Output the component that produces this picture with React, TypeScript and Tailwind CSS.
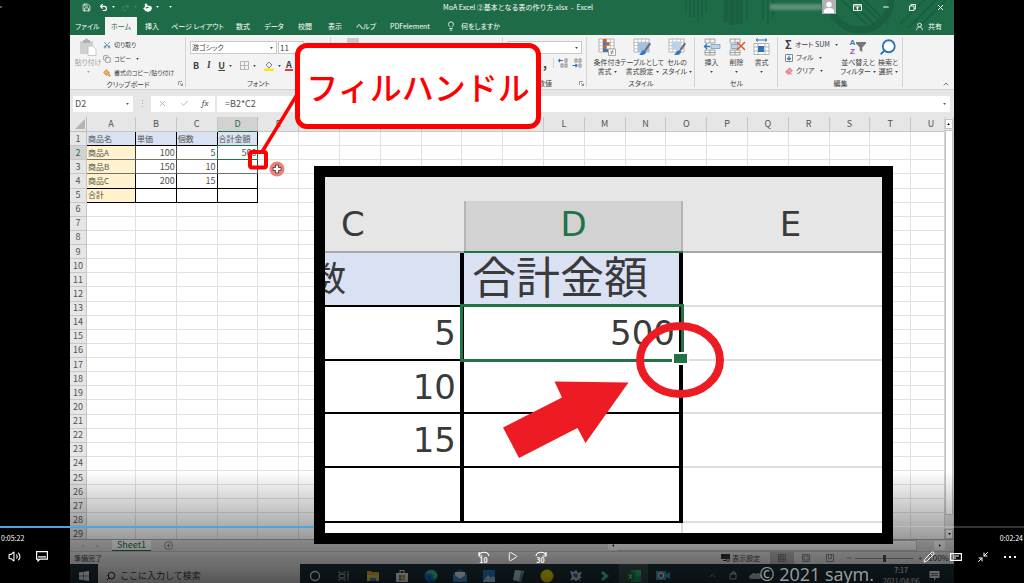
import type { ReactNode } from "react";
import {
  ArrowLeft,
  ChevronUp,
  Clipboard,
  Copy,
  Lightbulb,
  Minus,
  Paintbrush,
  Pencil,
  Play,
  Redo2,
  Save,
  Scissors,
  Search,
  Undo2,
  UserRound,
  Volume2,
  X,
  Check,
  Eraser,
  Minimize2,
  Pointer,
} from "lucide-react";

const TABS = [
  { label: "ファイル", width: "w-[35px]" },
  { label: "ホーム", width: "w-8", active: true },
  { label: "挿入", width: "w-[30px]" },
  { label: "ページ レイアウト", width: "w-[61px]" },
  { label: "数式", width: "w-[30px]" },
  { label: "データ", width: "w-8" },
  { label: "校閲", width: "w-[30px]" },
  { label: "表示", width: "w-[30px]" },
  { label: "ヘルプ", width: "w-8" },
  { label: "PDFelement", width: "w-14" },
];

const COLUMNS = "ABCDEFGHIJKLMNOPQRSTU".split("");

const DATA = [
  ["商品名", "単価", "個数", "合計金額"],
  ["商品A", "100", "5", "500"],
  ["商品B", "150", "10", ""],
  ["商品C", "200", "15", ""],
  ["合計", "", "", ""],
];

function Caret() {
  return (
    <svg viewBox="0 0 4 3" className="h-[2px] w-[3px] shrink-0 fill-current">
      <path d="M0 0h4L2 3z" />
    </svg>
  );
}

function Launcher() {
  return (
    <svg viewBox="0 0 5 5" className="absolute right-[3px] bottom-[3px] size-[5px] fill-none stroke-neutral-500">
      <path d="M.5 4V.5H4M2 2l2.5 2.5M4.5 2.5v2h-2" strokeWidth=".7" />
    </svg>
  );
}

function Group({ label, width, launcher, children }: { label?: string; width: string; launcher?: boolean; children?: ReactNode }) {
  return (
    <section className={`relative flex shrink-0 flex-col ${width}`}>
      <div className="flex flex-1 pt-[3px]">{children}</div>
      {label && <h2 className="h-[11px] text-center leading-[11px]">{label}</h2>}
      {launcher && <Launcher />}
      <span className="absolute top-[2px] right-0 bottom-[2px] w-px bg-[#d4d4d4]" />
    </section>
  );
}

function BigButton({ icon, lines, width, caretBelow }: { icon: ReactNode; lines: string[]; width: string; caretBelow?: boolean }) {
  return (
    <button className={`flex shrink-0 flex-col items-center whitespace-nowrap leading-[9px] ${width}`}>
      <span className="mb-[2px] flex h-[18px] items-center">{icon}</span>
      {lines.map((line, i) => (
        <span key={line} className="flex items-center gap-[2px]">
          {line}
          {!caretBelow && i === lines.length - 1 && <Caret />}
        </span>
      ))}
      {caretBelow && (
        <span className="flex h-[9px] items-center">
          <Caret />
        </span>
      )}
    </button>
  );
}

function SmallButton({ icon, label, caret }: { icon: ReactNode; label: string; caret?: boolean }) {
  return (
    <button className="flex h-[13px] items-center gap-[3px] whitespace-nowrap">
      {icon}
      {label}
      {caret && (
        <span className="pl-[2px]">
          <Caret />
        </span>
      )}
    </button>
  );
}

function GridIcon({ children }: { children?: ReactNode }) {
  return (
    <svg viewBox="0 0 18 18" className="size-[18px]">
      <path d="M1 1h15v13H1z" fill="#fff" stroke="#9a9a9a" strokeWidth=".7" />
      <path d="M1 4.3h15M1 7.6h15M1 10.9h15M4.8 1v13M8.6 1v13M12.4 1v13" stroke="#a8a8a8" strokeWidth=".6" />
      {children}
    </svg>
  );
}

function BrushMark() {
  return (
    <>
      <path d="M16.5 4.5 18 6l-5 7-1.5-1.5z" fill="#6b6b6b" />
      <path d="M11.5 12c-3 0-3 3-5.5 4.5 3 1.3 7 .6 7-3.2z" fill="#3478bd" />
    </>
  );
}

function CellsIcon({ kind }: { kind: "insert" | "delete" | "format" }) {
  return (
    <svg viewBox="0 0 18 18" className="size-[18px]" fill="none">
      {kind !== "format" && <path d="M2 1h10v4H2zM7 1v4M2 12h10v5H2zM7 12v5M2 14.5h10" stroke="#8f8f8f" strokeWidth=".8" />}
      {kind === "insert" && (
        <>
          <path d="M8 6.5h9v4H8z" fill="#bcd3ea" stroke="#7b9cbc" strokeWidth=".8" />
          <path d="M7 8.5H1.5M4 6 1.5 8.5 4 11" stroke="#2e75b6" strokeWidth="1.3" />
        </>
      )}
      {kind === "delete" && (
        <>
          <path d="M3 6.5h7v4H3z" fill="#bcd3ea" stroke="#7b9cbc" strokeWidth=".8" />
          <path d="m9 4 8 8M17 4l-8 8" stroke="#d9572b" strokeWidth="1.5" />
        </>
      )}
      {kind === "format" && (
        <>
          <path d="M1 5.5h15v11H1zM1 9h15M1 13h15M5 5.5v11M12 5.5v11" fill="#fff" stroke="#999" strokeWidth=".7" />
          <path d="M5 8h6v6H5z" fill="#2e75b6" />
          <path d="M3 2h11M5 .5 3 2l2 1.5M12 .5 14 2l-2 1.5" stroke="#2e75b6" />
        </>
      )}
    </svg>
  );
}

function TitleBar() {
  return (
    <header className="relative h-[35px] shrink-0 overflow-hidden bg-[#1e6c47] text-white">
      <svg viewBox="0 0 270 35" className="absolute top-0 right-0 h-[35px] w-[270px]" fill="none" stroke="#1a6040">
        <path d="M2 0v13M6 0v17M10 0v17M14 0v22M18 0v17M22 0v12M58 0v24M63 0v20M79 0v20M84 0v24M89 0v18" strokeWidth="1.6" />
        <path d="M42 0v22M48 0v25M54 0v24" strokeWidth="5" />
        <circle cx="176" cy="-1" r="31" strokeWidth="7" />
        <path d="m160-6 32 32M166-8l32 32M172-8l32 32M154-4l28 28M216 24 246-6M224 28l34-34M232 30l36-36" strokeWidth="2" />
      </svg>
      <div className="relative flex h-[14px] items-center">
        <div className="flex flex-1 items-center gap-[6px] pl-3">
          <button aria-label="上書き保存"><Save className="size-[9px]" /></button>
          <button aria-label="元に戻す" className="flex items-center gap-1 pl-[2px]"><Undo2 className="size-[9px]" strokeWidth={3} /><Caret /></button>
          <button aria-label="やり直し" className="flex items-center gap-1 text-[#4c8c6c]"><Redo2 className="size-[9px]" /><Caret /></button>
          <button aria-label="タッチ/マウス モード" className="flex items-center gap-1"><Pointer className="size-[9px]" fill="currentColor" /><Caret /></button>
          <button aria-label="カスタマイズ" className="pl-1"><Caret /></button>
        </div>
        <h1 className="whitespace-pre text-[7px]">MoA Excel ②基本となる表の作り方.xlsx  -  Excel</h1>
        <div className="flex flex-1 items-center justify-end">
          <span className="h-[6px] w-[52px] bg-[#5d8f78] blur-[1px]" />
          <span className="mr-[17px] flex size-[14px] items-end justify-center bg-[#b3b3b3]">
            <svg viewBox="0 0 14 14" className="size-[14px] fill-white">
              <circle cx="7" cy="4.5" r="2.7" />
              <path d="M2 13V11c0-2 2-3 5-3s5 1 5 3v2z" />
            </svg>
          </span>
          <button aria-label="リボンの表示オプション" className="mr-5">
            <svg viewBox="0 0 9 7" className="h-[7px] w-[9px]" fill="none" stroke="currentColor" strokeWidth=".9">
              <path d="M.5.5h8v6h-8zM.5 2h8M4.5 6V3M3 4.3 4.5 3 6 4.3" />
            </svg>
          </button>
          <button aria-label="最小化" className="mr-[19px]"><Minus className="size-[8px]" strokeWidth={3} /></button>
          <button aria-label="元に戻す(縮小)" className="mr-5">
            <svg viewBox="0 0 7 7" className="size-[7px]" fill="none" stroke="currentColor" strokeWidth=".9">
              <path d="M.5 2H5v4.5H.5zM2 2V.5h4.5V5H5" />
            </svg>
          </button>
          <button aria-label="閉じる" className="mr-[9px]"><X className="size-[9px]" strokeWidth={2.5} /></button>
        </div>
      </div>
      <nav className="relative mt-[3px] flex h-[18px] items-stretch text-[7px] [font-feature-settings:'palt']">
        {TABS.map((tab) => (
          <button key={tab.label} className={`shrink-0 whitespace-nowrap text-center ${tab.width} ${tab.active ? "bg-[#f3f3f3] text-[#1e6c47]" : ""}`}>
            {tab.label}
          </button>
        ))}
        <button className="flex items-center gap-[5px] whitespace-nowrap pl-2">
          <Lightbulb className="size-[10px]" />
          何をしますか
        </button>
        <button className="mr-3 ml-auto flex items-center gap-1">
          <UserRound className="size-[9px]" />
          共有
        </button>
      </nav>
    </header>
  );
}

function Ribbon() {
  return (
    <div className="flex h-[55px] shrink-0 border-b border-[#d0d0d0] bg-[#f3f3f3] text-[7px] text-neutral-700 [font-feature-settings:'palt']">
      <Group label="クリップボード" width="w-[116px]" launcher>
        <div className="pl-[3px] text-neutral-400">
          <BigButton
            width="w-[30px]"
            caretBelow
            lines={["貼り付け"]}
            icon={
              <svg viewBox="0 0 18 18" className="size-[18px]">
                <path d="M1 3h13v13H1z" fill="#cfcfcf" />
                <path d="M4 2h2c0-2 3-2 3 0h2v3H4z" fill="#b0b0b0" />
                <path d="M9 8h5l3 3v6.500H9z" fill="#fff" stroke="#bdbdbd" strokeWidth=".8" />
              </svg>
            }
          />
        </div>
        <div className="flex flex-col gap-px text-[6px]">
          <SmallButton icon={<Scissors className="size-[8px] -rotate-90 text-[#41719c]" />} label="切り取り" />
          <SmallButton icon={<Copy className="size-[8px] text-neutral-500" />} label="コピー" caret />
          <SmallButton icon={<Paintbrush className="size-[8px] rotate-90 text-[#c9782b]" fill="#f0b070" />} label="書式のコピー/貼り付け" />
        </div>
      </Group>
      <Group label="フォント" width="w-[145px]">
        <div className="flex flex-col gap-[5px] pt-[3px] pl-1">
          <div className="flex gap-px">
            <span className="relative flex items-center">
              <select aria-label="フォント名" className="h-[13px] w-[87px] appearance-none border border-[#c8c8c8] bg-white px-px">
                <option>游ゴシック</option>
              </select>
              <span className="pointer-events-none absolute right-1"><Caret /></span>
            </span>
            <select aria-label="フォント サイズ" className="h-[13px] w-[26px] appearance-none border border-[#c8c8c8] bg-white px-px text-[8px]">
              <option>11</option>
            </select>
          </div>
          <div className="flex items-center gap-2 pl-[3px] text-[9px] leading-[13px]">
            <button className="font-bold">B</button>
            <button className="font-serif font-bold italic">I</button>
            <button className="flex items-center gap-1 font-bold"><u>U</u><Caret /></button>
            <button aria-label="罫線" className="flex items-center gap-1">
              <svg viewBox="0 0 9 9" className="size-[9px]" fill="none" stroke="#b5b5b5"><path d="M.5.5h8v8h-8zM4.5 0v9M0 4.500h9" /></svg>
              <Caret />
            </button>
            <button aria-label="塗りつぶしの色" className="flex items-center gap-1">
              <svg viewBox="0 0 10 10" className="size-[10px]"><path d="M0 7.500h10V10H0z" fill="#f5e61d" /><path d="m5 1 3 3-3 3-3-3z" fill="#eee" stroke="#666" strokeWidth=".8" /></svg>
              <Caret />
            </button>
            <button className="-ml-1 h-[10px] border-b-2 border-[#e03c31] px-px leading-[8px] font-bold">A</button>
          </div>
        </div>
      </Group>
      <Group width="w-[172px]">
        <span className="ml-4 h-4 w-3 bg-[#c9c9c9]" />
      </Group>
      <Group label="数値" width="w-[84px]" launcher>
        <div className="flex flex-1 flex-col gap-1 px-[5px] pt-[3px]">
          <span className="relative flex items-center">
            <select aria-label="数値の書式" className="h-[13px] w-full appearance-none border border-[#c8c8c8] bg-white px-px">
              <option></option>
            </select>
            <span className="pointer-events-none absolute right-1"><Caret /></span>
          </span>
          <div className="flex justify-end gap-1">
            <button className="h-[10px] border-r border-[#d4d4d4] pr-[6px] text-[12px] leading-[4px] font-bold">,</button>
            <button aria-label="小数点以下の表示桁数を増やす">
              <svg viewBox="0 0 10 10" className="size-[10px]" fill="none" stroke="#777" strokeWidth=".8"><path d="M5 2.500H.5M2 1 .5 2.500 2 4" stroke="#2e75b6" strokeWidth="1.200" /><rect x="7" y="1" width="2" height="3" /><rect x="3" y="6" width="2" height="3" /><rect x="7" y="6" width="2" height="3" /></svg>
            </button>
            <button aria-label="小数点以下の表示桁数を減らす">
              <svg viewBox="0 0 10 10" className="size-[10px]" fill="none" stroke="#777" strokeWidth=".8"><path d="M.5 7.500H5M3.500 6 5 7.500 3.500 9" stroke="#2e75b6" strokeWidth="1.200" /><rect x="3" y="1" width="2" height="3" /><rect x="7" y="1" width="2" height="3" /><rect x="7" y="6" width="2" height="3" /></svg>
            </button>
          </div>
        </div>
      </Group>
      <Group label="スタイル" width="w-[108px]">
        <div className="flex pl-1">
          <BigButton width="w-8" lines={["条件付き", "書式"]} icon={<GridIcon><path d="M5 1h3.500v3.300H5zM5 7.600h3.500v3.300H5zM8.600 4.300h3v3.300h-3z" fill="#d9572b" /><path d="M5 4.300h3.600v3.300H5zM5 10.900h5V14H5z" fill="#3478bd" /><path d="M10.500 11h7v6.500h-7z" fill="#fff" stroke="#888" strokeWidth=".7" /><path d="M12.500 13.500h3M12.500 15h3M15 12l-2 4.500" stroke="#666" strokeWidth=".6" /></GridIcon>} />
          <BigButton width="w-[38px]" lines={["テーブルとして", "書式設定"]} icon={<GridIcon><path d="M4.800 4.300H16V14H4.800z" fill="#8fb8de" fillOpacity=".8" /><BrushMark /></GridIcon>} />
          <BigButton width="w-8" lines={["セルの", "スタイル"]} icon={<GridIcon><path d="M3.500 3.500h10v8h-10z" fill="#b9d2ea" /><BrushMark /></GridIcon>} />
        </div>
      </Group>
      <Group label="セル" width="w-[83px]">
        <div className="flex pl-1">
          <BigButton width="w-[25px]" caretBelow lines={["挿入"]} icon={<CellsIcon kind="insert" />} />
          <BigButton width="w-[25px]" caretBelow lines={["削除"]} icon={<CellsIcon kind="delete" />} />
          <BigButton width="w-[25px]" caretBelow lines={["書式"]} icon={<CellsIcon kind="format" />} />
        </div>
      </Group>
      <Group label="編集" width="w-[125px]">
        <div className="flex w-14 flex-col pl-[7px]">
          <SmallButton icon={<span className="w-2 text-[11px] leading-[9px] font-bold">Σ</span>} label="オート SUM" caret />
          <SmallButton icon={<svg viewBox="0 0 8 8" className="size-2" fill="none"><path d="M.5.5h7v7h-7z" fill="#fff" stroke="#888" /><path d="M4 1.500V6M2 4l2 2 2-2" stroke="#2e75b6" strokeWidth="1.200" /></svg>} label="フィル" caret />
          <SmallButton icon={<Eraser className="size-2 text-[#d9707a]" fill="#ee9aa2" />} label="クリア" caret />
        </div>
        <div className="flex pl-2">
          <BigButton
            width="w-8"
            lines={["並べ替えと", "フィルター"]}
            icon={
              <span className="flex items-center gap-px">
                <span className="flex flex-col font-['Liberation_Sans',sans-serif] text-[8px] leading-[9px] font-bold">
                  <span className="text-[#3478bd]">A</span>
                  <span className="text-[#9a4fb5]">Z</span>
                </span>
                <svg viewBox="0 0 10 10" className="size-[10px] fill-[#777]"><path d="M0 0h10v1.500L6.300 5.500V10l-2.600-1.500v-3L0 1.500z" /></svg>
              </span>
            }
          />
          <BigButton width="w-7" lines={["検索と", "選択"]} icon={<Search className="size-[18px] -scale-x-100 text-[#2e75b6]" fill="#fff" strokeWidth={2.5} />} />
        </div>
      </Group>
      <button aria-label="リボンを折りたたむ" className="mr-1 mb-px ml-auto self-end"><ChevronUp className="size-[8px]" /></button>
    </div>
  );
}

function FormulaBar() {
  return (
    <div className="flex h-[27px] shrink-0 items-center bg-[#e6e6e6] pr-1 pl-[3px] text-[9px] text-neutral-600">
      <span className="relative flex items-center">
        <input aria-label="名前ボックス" defaultValue="D2" className="h-4 w-[60px] bg-white px-[2px]" />
        <span className="absolute right-1"><Caret /></span>
      </span>
      <span className="flex w-[18px] flex-col items-center gap-[2px]">
        <i className="size-px bg-neutral-400" />
        <i className="size-px bg-neutral-400" />
        <i className="size-px bg-neutral-400" />
      </span>
      <div className="mr-[2px] flex h-4 w-16 items-center justify-around bg-white text-neutral-400">
        <button aria-label="キャンセル"><X className="size-[9px]" /></button>
        <button aria-label="入力"><Check className="size-[9px]" /></button>
        <button aria-label="関数の挿入" className="font-serif text-neutral-600 italic">fx</button>
      </div>
      <span className="relative flex flex-1 items-center">
        <input aria-label="数式バー" defaultValue="=B2*C2" className="h-4 w-full bg-white px-2" />
        <span className="absolute right-1 text-neutral-600"><Caret /></span>
      </span>
    </div>
  );
}

function cellStyle(row: number, col: number) {
  if (row > 4 || col > 3) return "border-[#e1e1e1]";
  const fill = row === 0 ? "bg-[#dae3f3] text-[8px]" : col === 0 ? "bg-[#fff2cc] text-[8px]" : "text-right";
  const edge = row === 0 || row === 4 || row === 3 ? "border-black" : "border-b-neutral-500 border-r-neutral-700";
  return `${fill} ${edge}`;
}

function Sheet() {
  return (
    <div className="flex min-h-0 flex-1 bg-[#e6e6e6]">
      <div className="min-w-0 flex-1 overflow-hidden">
        <table className="h-[425px] w-[calc(100%+8px)] table-fixed border-separate border-spacing-0 bg-white text-[9px] leading-[12px] text-neutral-600">
          <colgroup>
            <col className="w-[17px]" />
            <col className="w-[49px]" />
          </colgroup>
          <thead>
            <tr className="h-[15px] bg-[#e6e6e6]">
              <th className="border-r border-b border-[#bdbdbd] p-0">
                <svg viewBox="0 0 10 10" className="ml-[5px] size-[10px] fill-[#b5b5b5]"><path d="M10 0v10H0z" /></svg>
              </th>
              {COLUMNS.map((name) => (
                <th key={name} scope="col" className={`border-r border-b p-0 font-normal ${name === "D" ? "border-r-[#bdbdbd] border-b-[#217346] bg-[#d2d2d2] text-[#217346]" : "border-[#c6c6c6]"}`}>
                  {name}
                </th>
              ))}
            </tr>
          </thead>
          <tbody>
            {Array.from({ length: 29 }, (_, row) => (
              <tr key={row} className="h-[14px]">
                <th scope="row" className={`border-r border-b border-[#c6c6c6] p-0 font-normal ${row === 1 ? "bg-[#d2d2d2] text-[#217346]" : "bg-[#e6e6e6]"}`}>
                  {row + 1}
                </th>
                {COLUMNS.map((name, col) => (
                  <td key={name} className={`relative border-r border-b px-px py-0 whitespace-nowrap ${cellStyle(row, col)}`}>
                    {DATA[row]?.[col]}
                    {row === 1 && col === 3 && <span className="absolute -inset-px border border-[#217346]" />}
                  </td>
                ))}
              </tr>
            ))}
          </tbody>
        </table>
      </div>
      <div className="flex w-[10px] flex-col border-x border-[#d0d0d0]">
        <button aria-label="上へスクロール" className="mt-[2px] flex h-[10px] rotate-180 items-center justify-center border border-[#c4c4c4] bg-white"><Caret /></button>
        <span className="mt-px mb-[14px] flex-1 border border-[#c4c4c4] bg-white" />
        <button aria-label="下へスクロール" className="flex h-[10px] items-center justify-center border border-[#c4c4c4] bg-white"><Caret /></button>
      </div>
    </div>
  );
}

function StatusBars() {
  return (
    <>
      <div className="flex h-3 shrink-0 items-stretch border-t border-[#ababab] bg-[#e3e3e3] text-[9px] leading-[10px]">
        <span className="flex w-[42px] items-center gap-3 pl-[11px] text-neutral-400"><i className="rotate-90"><Caret /></i><i className="-rotate-90"><Caret /></i></span>
        <button className="w-[39px] border-b border-[#217346] bg-white text-[#217346]">Sheet1</button>
        <button aria-label="新しいシート" className="ml-[13px]">
          <svg viewBox="0 0 9 9" className="size-[9px]" fill="none" stroke="#777" strokeWidth=".8"><circle cx="4.5" cy="4.5" r="4" /><path d="M4.5 2.500v4M2.500 4.500h4" /></svg>
        </button>
        <div className="ml-auto flex w-[345px]">
          <button aria-label="左へスクロール" className="flex w-[9px] rotate-90 items-center justify-center bg-white"><Caret /></button>
          <span className="mr-[18px] flex-1 border border-[#c4c4c4] bg-white" />
          <button aria-label="右へスクロール" className="mr-[10px] flex w-[9px] -rotate-90 items-center justify-center bg-white"><Caret /></button>
        </div>
      </div>
      <div className="flex h-[13px] shrink-0 items-center border-t border-[#c6c6c6] bg-[#e9e9e9] pr-[5px] pl-1 text-[7px] text-neutral-700">
        準備完了
        <button className="mr-[10px] ml-auto flex items-center gap-[2px]">
          <svg viewBox="0 0 9 8" className="h-2 w-[9px]"><path d="M0 0h9v5H0zM2 6h4v1H2z" fill="#333" /><circle cx="7" cy="6" r="1.5" fill="#ddd" stroke="#333" strokeWidth=".7" /></svg>
          表示設定
        </button>
        <span className="flex h-full text-neutral-500">
          <button aria-label="標準" className="flex w-6 items-center justify-center bg-[#bcbcbc]"><svg viewBox="0 0 8 8" className="size-2" fill="none" stroke="currentColor" strokeWidth=".8"><path d="M.5.5h7v7h-7zM0 2.800h8M0 5.200h8M2.800 0v8M5.200 0v8" /></svg></button>
          <button aria-label="ページ レイアウト" className="flex w-6 items-center justify-center"><svg viewBox="0 0 8 8" className="size-2" fill="none" stroke="currentColor" strokeWidth=".8"><path d="M.5.5h7v7h-7zM2 2h4v4H2z" /></svg></button>
          <button aria-label="改ページ プレビュー" className="mr-1 flex w-6 items-center justify-center"><svg viewBox="0 0 8 8" className="size-2" fill="none" stroke="currentColor" strokeWidth=".8"><path d="M.5.5h7v7h-7zM2.500 1v3.500h3V1" /></svg></button>
        </span>
        <Minus className="size-[6px]" />
        <input aria-label="ズーム" type="range" className="mx-[3px] h-2 w-[58px] appearance-none bg-[linear-gradient(#999,#999)] bg-size-[100%_1px] bg-center bg-no-repeat [&::-webkit-slider-thumb]:h-[7px] [&::-webkit-slider-thumb]:w-[3px] [&::-webkit-slider-thumb]:appearance-none [&::-webkit-slider-thumb]:bg-neutral-600" />
        <span className="w-2 text-center">+</span>
        <span className="pl-1 text-[8px]">100%</span>
      </div>
    </>
  );
}

function TaskIcon({ label, active, children }: { label: string; active?: boolean; children: ReactNode }) {
  return (
    <button aria-label={label} className={`flex w-[29px] shrink-0 items-center justify-center pt-1 ${active ? "bg-[#3a4d52]" : ""}`}>
      <svg viewBox="0 0 14 14" className="size-[14px]" fill="none">{children}</svg>
    </button>
  );
}

function Taskbar() {
  return (
    <div className="flex h-[19px] shrink-0 items-stretch overflow-hidden bg-[#1c303a]">
      <button aria-label="スタート" className="flex w-7 items-center justify-center pt-1">
        <svg viewBox="0 0 10 10" className="size-[10px] fill-white"><path d="M0 1.500 4.500.8v3.900H0zM5 .7 10 0v4.700H5zM0 5.200h4.500v4L0 8.600zM5 5.200h5V10l-5-.7z" /></svg>
      </button>
      <label className="flex w-[202px] items-center gap-1 bg-[#f2f2f2] pt-1 pl-2">
        <Search className="size-[10px] -scale-x-100 text-black" />
        <input aria-label="検索" placeholder="ここに入力して検索" className="min-w-0 flex-1 text-[9px] leading-[12px] placeholder:text-neutral-700" />
      </label>
      <TaskIcon label="Cortana"><circle cx="7" cy="7" r="4.5" stroke="#fff" strokeWidth="1.300" /></TaskIcon>
      <TaskIcon label="タスク ビュー"><path d="M2 2v2h6V2M2 12v-2h6v2M2 5.500h6v3H2zM11 2v10M10 6h2" stroke="#aaa" /></TaskIcon>
      <TaskIcon label="エクスプローラー"><path d="M1 2h4l1 1h7v9H1z" fill="#f2b632" /><path d="M1 6h12v6H1z" fill="#ffd869" /><path d="M4 9h6v3H4z" fill="#3b8fd6" /></TaskIcon>
      <TaskIcon label="ストア"><path d="M1 4h12v9H1z" fill="#fff" /><path d="M5 4V1.500h4V4" stroke="#fff" /><path d="M4 6h2.500v2.500H4z" fill="#f25022" /><path d="M7.500 6H10v2.500H7.500z" fill="#7fba00" /><path d="M4 9h2.500v2.500H4z" fill="#00a4ef" /><path d="M7.500 9H10v2.500H7.500z" fill="#ffb900" /></TaskIcon>
      <TaskIcon label="Edge"><circle cx="7" cy="7" r="6.5" fill="#1683d8" /><path d="M1 5C3 0 12-.5 13.500 6c.3 3-3 4-5 3 2-4-3-6-7.500-4z" fill="#4fd38b" /><path d="M5 7c-1 4 3 6.500 6.500 5" stroke="#0b4f9c" strokeWidth="1.500" /></TaskIcon>
      <TaskIcon label="メール"><path d="M0 5 7 0l7 5v8H0z" fill="#1a6fc4" /><path d="M2 3h10v4l-5 3-5-3z" fill="#fff" /><path d="m0 5 7 5 7-5v8H0z" fill="#3ba0ee" /></TaskIcon>
      <TaskIcon label="フォト"><path d="M1 1h12v12H1z" fill="#2a7fd4" /><path d="m1 12 5-6 3 3 2-2 2 2v4H1z" fill="#aee0ff" /></TaskIcon>
      <TaskIcon label="メモ"><path d="m4 1 9 1-3 11-8-2z" fill="#b7dbe4" /><path d="m10 2 3 1-3 10-2-1z" fill="#5f8f9d" /></TaskIcon>
      <TaskIcon label="録画"><circle cx="7" cy="7" r="6.5" fill="#f4e400" /></TaskIcon>
      <TaskIcon label="ペイント"><path d="m1 2 4 1 2-2 2 3 4-1-2 4 2 2-3 .5 2 3-3-2-2 2-2-2-4 1 2-4z" fill="#c9d7ee" /><path d="m4 4 5 1-1 4-3-1z" fill="#3f65ae" /></TaskIcon>
      <TaskIcon label="Filmora"><path d="m5 2 6 5-6 5-2-2 3-3-3-3z" fill="#49d5bd" /></TaskIcon>
      <TaskIcon label="Excel" active><path d="M4 1h10v12H4z" fill="#21a366" /><path d="M9 1h5v6H9z" fill="#33c481" /><path d="M0 4h7v7H0z" fill="#107c41" /><path d="m2 5.500 3 4M5 5.500l-3 4" stroke="#fff" /></TaskIcon>
      <TaskIcon label="レコーダー"><path d="M0 2h10v9H0zM10 5l4-2v7l-4-2z" fill="#35a9d8" /><circle cx="5" cy="6.5" r="3" fill="#fff" /><circle cx="5" cy="6.5" r="2" fill="#d8372a" /></TaskIcon>
      <div className="ml-auto flex items-center gap-3 pt-1 text-white/70">
        <ChevronUp className="size-[9px]" />
        <svg viewBox="0 0 8 9" className="h-[9px] w-2" fill="none" stroke="currentColor"><path d="M1 3h6v5H1zM3 3V1h3v2" /></svg>
        <svg viewBox="0 0 12 8" className="h-2 w-3 fill-current"><path d="M2 7a2 2 0 0 1 0-4 3 3 0 0 1 5-1 3 3 0 0 1 4 5z" /></svg>
      </div>
      <div className="ml-[122px] w-9 shrink-0 pt-px text-center text-[7px] leading-[11px] whitespace-nowrap text-white">
        <p>7:17</p>
        <p>2021/04/06</p>
      </div>
      <button aria-label="通知" className="mr-[14px] ml-[10px] pt-1">
        <svg viewBox="0 0 11 11" className="size-[11px]"><path d="M.5 1h10v7H7L5 10.500V8H.5z" fill="#fff" /><path d="M2 3.500h7M2 5.500h7" stroke="#555" strokeWidth=".8" /></svg>
      </button>
    </div>
  );
}

function ZoomedSheet() {
  const line = "border-b-2 border-b-black";
  const outside = "border-b-2 border-b-[#dedede]";
  return (
    <figure className="absolute top-[166px] left-[314px] h-[378px] w-[579px] overflow-hidden border-[11px] border-black bg-white">
      <table className="w-full table-fixed border-separate border-spacing-0 font-['DejaVu_Sans','Noto_Sans_CJK_JP',sans-serif] text-[34px] leading-[46px] text-[#3a3a3a]">
        <colgroup>
          <col className="w-[139px]" />
          <col className="w-[219px]" />
          <col />
        </colgroup>
        <thead>
          <tr className="h-[76px] bg-[#e6e6e6] align-bottom">
            <th scope="col" className="border-b-2 border-[#a8a8a8] py-0 pr-0 pb-1 pl-4 text-left font-normal">C</th>
            <th scope="col" className="border-b-2 border-[#217346] p-0 font-normal text-[#217346]">
              <div className="border-x-2 border-[#b5b5b5] bg-[#d2d2d2] pb-1">D</div>
            </th>
            <th scope="col" className="border-b-2 border-[#a8a8a8] p-0 pb-1 pl-4 font-normal">E</th>
          </tr>
        </thead>
        <tbody>
          <tr className="h-[54px]">
            <td className={`border-r-4 border-r-black bg-[#dae1f3] p-0 ${line}`}>
              <div className="flex w-[21px] justify-end overflow-hidden">数</div>
            </td>
            <td className={`border-r-4 border-r-black bg-[#dae1f3] py-0 pr-0 pl-2 text-[44px] whitespace-nowrap ${line}`}>合計金額</td>
            <td className={outside} />
          </tr>
          <tr className="h-[54px]">
            <td className={`border-r-4 border-r-black px-1 py-0 text-right ${line}`}>5</td>
            <td className={`relative border-r-4 border-r-black px-1 py-0 text-right ${line}`}>
              500
              <span className="absolute -top-[3px] -right-[5px] -bottom-[3px] -left-1 border-[3px] border-[#217346]" />
              <span className="absolute -right-2 -bottom-1 h-[9px] w-[13px] bg-[#217346] outline-2 outline-white" />
            </td>
            <td className={outside} />
          </tr>
          <tr className="h-[53px]">
            <td className={`border-r-4 border-r-black px-1 py-0 text-right ${line}`}>10</td>
            <td className={`border-r-4 border-r-black ${line}`} />
            <td className={outside} />
          </tr>
          <tr className="h-[54px]">
            <td className={`border-r-4 border-r-black px-1 py-0 text-right ${line}`}>15</td>
            <td className={`border-r-4 border-r-black ${line}`} />
            <td className={outside} />
          </tr>
          <tr className="h-[55px]">
            <td className={`border-r-4 border-r-black ${line}`} />
            <td className={`border-r-4 border-r-black ${line}`} />
            <td className={outside} />
          </tr>
        </tbody>
      </table>
      <svg viewBox="0 0 557 356" className="absolute top-0 left-0 h-[356px] w-[557px]">
        <path d="M357 346v10" stroke="#dedede" strokeWidth="2" />
        <ellipse cx="355" cy="183" rx="40" ry="34" fill="none" stroke="#ed1c24" strokeWidth="8" />
        <path d="m178 250.500 59-30-7.500-16 74 1-43 60.500-8-15-58.500 30z" fill="#ed1c24" />
      </svg>
    </figure>
  );
}

function Callout() {
  return (
    <>
      <svg viewBox="0 0 60 100" className="absolute top-[88px] left-[244px] h-[100px] w-[60px]" fill="none">
        <path d="M54 5 18 64" stroke="#f00" strokeWidth="3.500" />
        <rect x="6" y="64" width="16" height="15.500" rx="2" stroke="#f00" strokeWidth="4" />
        <circle cx="33" cy="81" r="7.500" fill="#f08078" />
        <path d="M31.500 77h3v2.500H37v3h-2.500V85h-3v-2.500H29v-3h2.500z" fill="#fff" stroke="#444" strokeWidth=".9" />
      </svg>
      <p className="absolute top-[43px] left-[295px] flex h-[86px] w-[246px] items-center justify-center rounded-xl border-[5px] border-[#f00] bg-white text-[32px] font-medium whitespace-nowrap text-[#f00]">
        フィルハンドル
      </p>
    </>
  );
}

function SkipIcon({ seconds, forward }: { seconds: number; forward?: boolean }) {
  return (
    <span className="flex flex-col items-center text-[7px] leading-[6px] font-bold">
      <svg viewBox="0 0 12 6" className={`h-[6px] w-3 ${forward ? "-scale-x-100" : ""}`} fill="none" stroke="currentColor" strokeWidth="1.200">
        <path d="M1 5C2 0 10 0 11 5M1 1v4h3.500" />
      </svg>
      {seconds}
    </span>
  );
}

function PlayerControls() {
  return (
    <div className="absolute inset-x-0 bottom-0 h-[57px] text-white">
      <div className="flex h-[2px] bg-white/20">
        <span className="w-[69%] bg-[#4ba7db]" />
      </div>
      <div className="flex justify-between px-px pt-1 text-[7px] leading-[12px]">
        <time>0:05:22</time>
        <time>0:02:24</time>
      </div>
      <div className="grid grid-cols-3 items-center px-2 pt-[6px]">
        <div className="flex items-center gap-[15px]">
          <button aria-label="音量"><Volume2 className="size-[13px]" /></button>
          <button aria-label="字幕">
            <svg viewBox="0 0 12 11" className="h-[11px] w-3" fill="none" stroke="currentColor" strokeWidth="1.200"><path d="M.6.6h10.800v7.500H4L2 10V8.100H.6zM2 5.800h8" /></svg>
          </button>
        </div>
        <div className="flex items-center justify-center gap-[17px]">
          <button aria-label="10秒戻る"><SkipIcon seconds={10} /></button>
          <button aria-label="再生"><Play className="size-[11px]" /></button>
          <button aria-label="30秒進む"><SkipIcon seconds={30} forward /></button>
        </div>
        <div className="flex items-center justify-end gap-[15px]">
          <button aria-label="編集"><Pencil className="size-3" /></button>
          <button aria-label="ミニ ビュー">
            <svg viewBox="0 0 12 8" className="h-2 w-3" fill="none" stroke="currentColor" strokeWidth="1.200"><path d="M.6.6h10.800v6.800H.6zM3 3h6M3 5h3" /></svg>
          </button>
          <button aria-label="全画面表示の終了"><Minimize2 className="size-3" /></button>
          <button aria-label="その他" className="flex gap-[3px]">
            <i className="size-[2px] bg-white" />
            <i className="size-[2px] bg-white" />
            <i className="size-[2px] bg-white" />
          </button>
        </div>
      </div>
    </div>
  );
}

export default function App() {
  return (
    <main lang="ja" className="relative flex h-screen flex-col overflow-hidden bg-black px-[70px] font-['Noto_Sans_CJK_JP','Noto_Sans',sans-serif]">
      <button aria-label="戻る" className="absolute top-px -left-2 text-white/70"><ArrowLeft className="size-3" /></button>
      <TitleBar />
      <Ribbon />
      <FormulaBar />
      <Sheet />
      <StatusBars />
      <Taskbar />
      <div className="pointer-events-none absolute inset-x-0 bottom-0 h-28 bg-linear-to-b from-transparent to-black/65" />
      <PlayerControls />
      <ZoomedSheet />
      <Callout />
      <p className="absolute right-[150px] bottom-0 font-['Open_Sans',sans-serif] text-[18px] leading-[18px] text-white/60">© 2021 saym.</p>
    </main>
  );
}
